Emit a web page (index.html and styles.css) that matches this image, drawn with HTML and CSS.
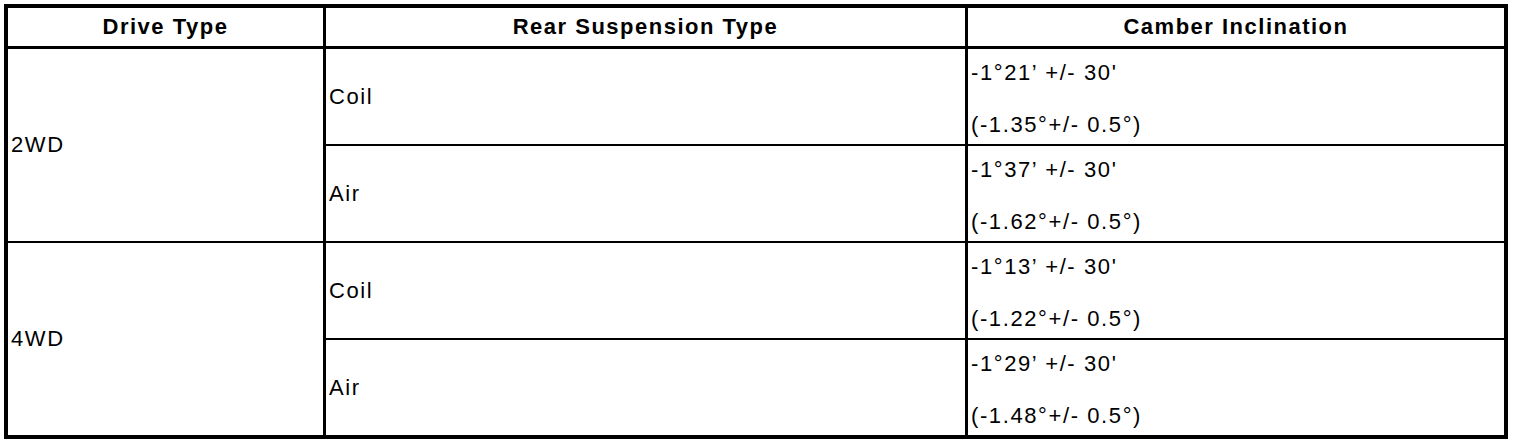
FILE: index.html
```html
<!DOCTYPE html>
<html>
<head>
<meta charset="utf-8">
<link rel="stylesheet" href="styles.css">
</head>
<body>
<table class="spec">
  <thead>
    <tr>
      <th class="c1">Drive Type</th>
      <th class="c2">Rear Suspension Type</th>
      <th class="c3">Camber Inclination</th>
    </tr>
  </thead>
  <tbody>
    <tr>
      <td class="c1" rowspan="2">2WD</td>
      <td class="c2">Coil</td>
      <td class="c3"><p>-1°21’ +/- 30'</p><p>(-1.35°+/- 0.5°)</p></td>
    </tr>
    <tr class="sep">
      <td class="c2">Air</td>
      <td class="c3"><p>-1°37’ +/- 30'</p><p>(-1.62°+/- 0.5°)</p></td>
    </tr>
    <tr class="sep">
      <td class="c1" rowspan="2">4WD</td>
      <td class="c2">Coil</td>
      <td class="c3"><p>-1°13’ +/- 30'</p><p>(-1.22°+/- 0.5°)</p></td>
    </tr>
    <tr class="sep">
      <td class="c2">Air</td>
      <td class="c3"><p>-1°29’ +/- 30'</p><p>(-1.48°+/- 0.5°)</p></td>
    </tr>
  </tbody>
</table>
</body>
</html>
```

FILE: styles.css
```css
html, body {
  margin: 0;
  padding: 0;
  background: #fff;
}
body {
  padding: 4px;
  font-family: "Liberation Sans", Arial, Helvetica, sans-serif;
  color: #000;
}
.spec {
  width: 1504px;
  box-sizing: border-box;
  table-layout: fixed;
  border-collapse: separate;
  border-spacing: 0;
  border: 4px solid #000;
}
.spec th,
.spec td {
  box-sizing: border-box;
  padding: 0 3px;
  font-size: 22px;
  line-height: 24px;
  letter-spacing: 1.6px;
  vertical-align: middle;
  text-align: left;
}
.spec th {
  font-weight: bold;
  letter-spacing: 1.5px;
  text-align: center;
  height: 41px;
  padding-top: 7px;
  padding-bottom: 7px;
  border-bottom: 3px solid #000;
}
.spec th.c1 { width: 315px; }
.spec th.c2 { width: 642px; }
.spec th.c3 { width: 539px; }
.spec .c2,
.spec .c3 {
  border-left: 3px solid #000;
}
.spec tr.sep td {
  border-top: 2px solid #000;
}
.spec td.c3 {
  padding-top: 12px;
  padding-bottom: 7px;
}
.spec td.c3 p {
  margin: 0;
}
.spec td.c3 p + p {
  margin-top: 28px;
}
```
